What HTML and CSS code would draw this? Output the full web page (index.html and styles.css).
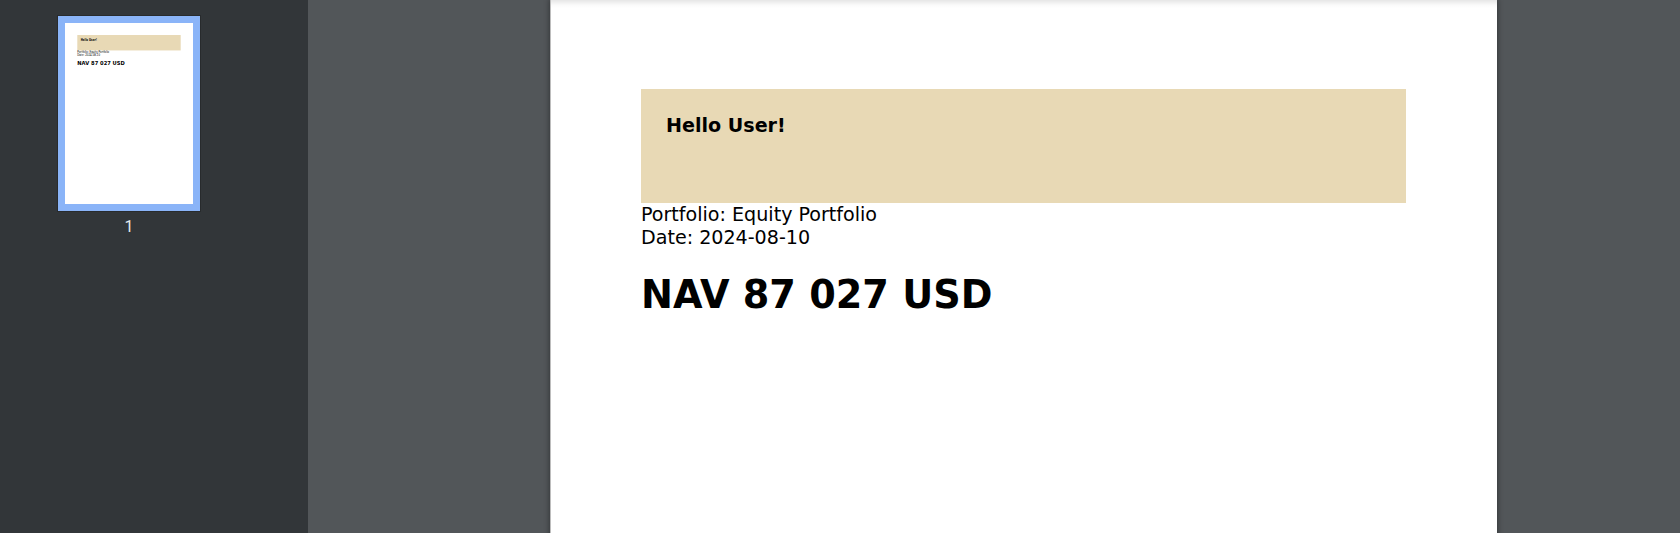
FILE: index.html
```html
<!DOCTYPE html>
<html lang="en">
<head>
<meta charset="utf-8">
<title>Portfolio report</title>
<link rel="stylesheet" href="styles.css">
</head>
<body>
<div class="viewer">
  <aside class="sidebar">
    <div class="thumb-col">
      <div class="thumb">
        <div class="thumb-inner">
          <div class="page page-mini">
            <div class="banner"><h1 class="hello">Hello User!</h1></div>
            <div class="meta">
              <div>Portfolio: Equity Portfolio</div>
              <div>Date: 2024-08-10</div>
            </div>
            <h2 class="nav">NAV 87 027 USD</h2>
          </div>
        </div>
      </div>
      <div class="thumb-label">1</div>
    </div>
  </aside>
  <main class="canvas">
    <div class="page page-main">
      <div class="banner"><h1 class="hello">Hello User!</h1></div>
      <div class="meta">
        <div>Portfolio: Equity Portfolio</div>
        <div>Date: 2024-08-10</div>
      </div>
      <h2 class="nav">NAV 87 027 USD</h2>
    </div>
  </main>
</div>
</body>
</html>
```

FILE: styles.css
```css
html, body {
  margin: 0;
  padding: 0;
  height: 533px;
  overflow: hidden;
}

.viewer {
  display: flex;
  width: 1680px;
  height: 533px;
  overflow: hidden;
}

.sidebar {
  width: 308px;
  flex-shrink: 0;
  background: #323639;
  padding: 16px 0 0 58px;
  box-sizing: border-box;
}

.thumb-col {
  width: 142px;
  display: flex;
  flex-direction: column;
  align-items: center;
}

.thumb {
  border: 7px solid #8ab4f8;
  box-shadow: 0 0 0 1px rgba(0, 0, 0, 0.2);
}

.thumb-inner {
  width: 128px;
  height: 181px;
  overflow: hidden;
  background: #fff;
}

.page-mini {
  transform: scale(0.13516);
  transform-origin: 0 0;
  background: #fff;
}

.thumb-label {
  margin-top: 6px;
  font-family: Roboto, "Liberation Sans", sans-serif;
  font-size: 16px;
  color: #e8eaed;
  line-height: 19px;
}

.canvas {
  flex: 1;
  display: flex;
  background: #525659;
  padding-left: 242px;
  overflow: hidden;
}

.page {
  width: 947px;
  height: 1339px;
  flex-shrink: 0;
  box-sizing: border-box;
  padding: 89px 91px 0;
  font-family: "DejaVu Sans", sans-serif;
  color: #000;
}

.page-main {
  background: linear-gradient(to bottom, #e6e6e6 0, #fafafa 5px, #fff 8px);
  box-shadow: 0 0 5px 1px rgba(0, 0, 0, 0.35), inset 1px 0 0 #bdbdbd;
}

.banner {
  height: 114px;
  box-sizing: border-box;
  padding: 25px 25px 0;
  background: #e8d9b5;
}

.hello {
  margin: 0;
  font-size: 19.1px;
  font-weight: 700;
  line-height: normal;
}

.meta {
  font-size: 19.1px;
  line-height: 23.33px;
}

.nav {
  margin: 23px 0 0;
  font-size: 38.2px;
  font-weight: 700;
  line-height: normal;
}
```
